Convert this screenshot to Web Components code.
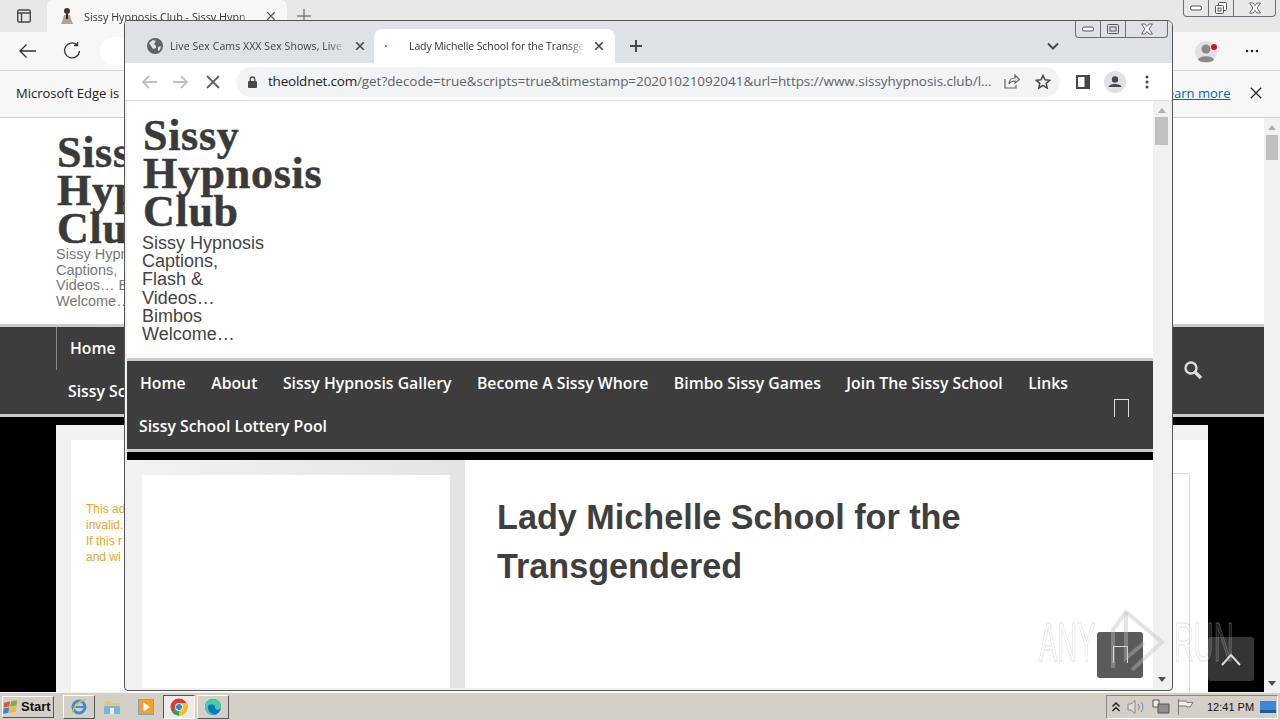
<!DOCTYPE html>
<html>
<head>
<meta charset="utf-8">
<title>Desktop</title>
<style>
  html, body { margin: 0; padding: 0; width: 1280px; height: 720px; overflow: hidden; background: #000; font-family: "Liberation Sans", sans-serif; }
</style>
</head>
<body>
<desk-top>
  <edge-window></edge-window>
  <chrome-window></chrome-window>
  <any-mark></any-mark>
  <task-bar></task-bar>
</desk-top>

<script>
(function(){
    // Small helper so each component only has to list its markup
    function define(name, html){
        customElements.define(name, class extends HTMLElement {
            constructor(){
                super();
                this.attachShadow({mode: 'open'});
                this.shadowRoot.innerHTML = html;
            }
        });
    }

    const NAV_FONT = '"Open Sans", "DejaVu Sans", sans-serif';
    const FADE = 'linear-gradient(90deg, #000 calc(100% - 18px), transparent)';

    define('desk-top', `
        <style>
        :host { display: block; position: relative; width: 1280px; height: 720px; overflow: hidden; background: #000; }
        </style>
        <slot></slot>
    `);

    // Two stroked arrows and crosses are reused by both browsers
    const ICON_X = (size, color, width) => `<svg width="${size}" height="${size}" viewBox="0 0 12 12" fill="none" stroke="${color}" stroke-width="${width}"><path d="M1.5 1.5l9 9M10.5 1.5l-9 9"/></svg>`;

    define('win-controls', `
        <style>
        :host { display: flex; box-sizing: border-box; height: 100%; border: 1px solid #6b6f75; border-top: 0; border-radius: 0 0 4px 4px; }
        div { display: flex; align-items: center; justify-content: center; border-right: 1px solid #6b6f75; }
        div:last-child { border-right: 0; flex: 1; }
        .c { width: 24px; }
        svg { display: block; }
        </style>
        <div class="c"><svg width="14" height="6" viewBox="0 0 14 6"><rect x="1.5" y="1" width="11" height="4" rx="1.5" fill="#fff" stroke="#555"/></svg></div>
        <div class="c"><slot name="mid"></slot></div>
        <div><svg width="14" height="12" viewBox="0 0 14 12" fill="#fff" stroke="#666"><path d="M1.5 1H5L7 3.5 9 1h3.500L9 6l3.500 5H9L7 8.500 5 11H1.500L5 6z"/></svg></div>
    `);

    define('scroll-bar', `
        <style>
        :host { display: flex; flex-direction: column; align-items: center; box-sizing: border-box; width: var(--w, 17px); height: 100%; background: #f1f1f1; }
        .up, .down { width: 0; height: 0; border-left: 4.500px solid transparent; border-right: 4.500px solid transparent; flex: none; }
        .up { border-bottom: 5px solid #b0b0b0; margin-top: var(--top, 7px); }
        .down { border-top: 5px solid #505050; margin-bottom: 6px; }
        .thumb { width: calc(100% - 4px); height: var(--thumb, 28px); background: #c1c1c1; margin-top: var(--gap, 4px); flex: none; }
        .sp { flex: 1; }
        </style>
        <div class="up"></div><div class="thumb"></div><div class="sp"></div><div class="down"></div>
    `);

    define('site-nav', `
        <style>
        :host { display: block; position: relative; box-sizing: border-box; background: #3d3d3d; border-top: 3px solid #cccccc; border-bottom: 3px solid #cccccc; color: #fff; font: 600 15.800px/43px ${NAV_FONT}; }
        ul { list-style: none; margin: 0; padding: 1px 0 0 13px; display: flex; flex-wrap: wrap; column-gap: 25.500px; }
        li { white-space: nowrap; }
        .box { position: absolute; left: 987px; top: 38px; width: 13px; height: 17px; border: 1px solid #ddd; border-bottom: 0; }
        </style>
        <ul>
            <li>Home</li><li>About</li><li>Sissy Hypnosis Gallery</li><li>Become A Sissy Whore</li>
            <li>Bimbo Sissy Games</li><li>Join The Sissy School</li><li>Links</li>
            <li style="margin-left:-1px;flex-basis:100%">Sissy School Lottery Pool</li>
        </ul>
        <div class="box"></div>
    `);

    define('edge-window', `
        <style>
        :host { display: flex; flex-direction: column; position: absolute; left: 0; top: 0; width: 1280px; height: 692px; background: #fff; overflow: hidden; }
        .tabs { height: 32px; background: #e8e8e8; display: flex; align-items: center; flex: none; position: relative; }
        .side { width: 47px; display: flex; justify-content: center; }
        .tab { box-sizing: border-box; width: 240px; height: 32px; background: #f7f7f7; border-radius: 6px 6px 0 0; display: flex; align-items: center; padding: 0 11px 0 12px; font: 10.800px "Open Sans", sans-serif; color: #333; }
        .tab span { flex: 1; margin: 0 10px 0 9px; overflow: hidden; white-space: nowrap; -webkit-mask-image: ${FADE}; mask-image: ${FADE}; }
        .plus { margin-left: 10px; }
        .ctl { position: absolute; left: 1183px; top: 0; width: 93px; height: 17px; }
        .bar { height: 38px; background: #f7f7f7; border-bottom: 1px solid #d8d8d8; display: flex; align-items: center; flex: none; position: relative; }
        .bar .back { margin-left: 18px; }
        .bar .reload { margin-left: 24px; }
        .pill { margin-left: 18px; width: 60px; height: 28px; border-radius: 14px; background: #fff; }
        .prof { position: absolute; left: 1194px; top: 7px; }
        .dots { position: absolute; left: 1245px; top: 17px; }
        .info { box-sizing: border-box; height: 47px; padding: 0 0 2px 16px; background: #f7f7f7; border-bottom: 1px solid #d0d0d0; display: flex; align-items: center; flex: none; font: 13px "Open Sans", sans-serif; color: #222; position: relative; }
        .info a { position: absolute; left: 1160px; color: #0067b8; text-decoration: underline; }
        .info svg { position: absolute; left: 1249px; top: 15px; }
        .page { flex: 1; display: flex; min-height: 0; }
        .main { flex: 1; display: flex; flex-direction: column; min-width: 0; }
        header { height: 206px; box-sizing: border-box; padding: 16px 0 0 57px; background: #fff; flex: none; }
        h1 { margin: 0; width: 130px; font: bold 44px/38px "Liberation Serif", serif; letter-spacing: .7px; color: #3a3a3a; -webkit-text-stroke: .5px #3a3a3a; }
        p { margin: -1px 0 0 -1px; width: 120px; font: 14.500px/15.500px "Liberation Sans", sans-serif; color: #777; }
        nav { flex: none; box-sizing: border-box; height: 93px; background: #3d3d3d; border-top: 3px solid #ccc; border-bottom: 3px solid #ccc; position: relative; color: #fff; font: 600 15.800px/43px ${NAV_FONT}; }
        nav .d { position: absolute; left: 56px; top: 0; height: 43px; border-left: 1px solid #888; padding-left: 13px; }
        nav .e { position: absolute; left: 68px; top: 43px; }
        nav svg { position: absolute; left: 1183px; top: 33px; }
        .black { flex: 1; background: #000; padding: 8px 56px 0; min-height: 0; display: flex; }
        .wrap { flex: 1; background: #f1f1f1; padding: 15px 0 0 15px; display: flex; }
        .inner { flex: 1; background: #fff; position: relative; }
        .inner .msg { position: absolute; left: 15px; top: 61px; font: 12px/16px "Liberation Sans", sans-serif; color: #e8a42c; }
        .inner .line { position: absolute; left: 100px; top: 33px; right: 18px; bottom: 0; border: 1px solid #ddd; border-width: 1px 1px 0 0; }
        .top { position: absolute; left: 1208px; top: 637px; width: 46px; height: 44px; background: rgba(61,61,61,.85); border-radius: 3px; display: flex; align-items: center; justify-content: center; }
        </style>
        <div class="tabs">
            <div class="side"><svg width="16" height="16" viewBox="0 0 16 16" fill="none" stroke="#444" stroke-width="1.400"><rect x="1.700" y="2" width="12.600" height="12" rx="1.500"/><path d="M1.700 5h12.600M5.500 5v9" /></svg></div>
            <div class="tab">
                <svg width="16" height="18" viewBox="0 0 16 18"><circle cx="8" cy="4" r="3" fill="#4a3527"/><path d="M5 8h6l1 4 2 5H2l2-5z" fill="#b8a08c"/><path d="M7 7h2v5H7z" fill="#2a2a2a"/></svg>
                <span>Sissy Hypnosis Club - Sissy Hypn</span>
                ${ICON_X(10, '#555', 1.400)}
            </div>
            <svg class="plus" width="14" height="14" viewBox="0 0 14 14" stroke="#555" stroke-width="1"><path d="M7 0v14M0 7h14"/></svg>
            <win-controls class="ctl"><svg slot="mid" width="14" height="14" viewBox="0 0 14 14" fill="#fff" stroke="#555"><rect x="4.500" y="1.500" width="8" height="8" rx="1"/><rect x="1.500" y="4.500" width="8" height="8" rx="1"/><rect x="4" y="7" width="3" height="3" fill="none"/></svg></win-controls>
        </div>
        <div class="bar">
            <svg class="back" width="20" height="16" viewBox="0 0 20 16" fill="none" stroke="#333" stroke-width="1.300"><path d="M18 8H2M8.500 1.500L2 8l6.500 6.500"/></svg>
            <svg class="reload" width="20" height="20" viewBox="0 0 20 20" fill="none" stroke="#333" stroke-width="1.300"><path d="M15 3.800A7.500 7.500 0 1 0 17.500 10M15.500 1v3.500H12"/></svg>
            <div class="pill"></div>
            <svg class="prof" width="26" height="26" viewBox="0 0 26 26"><circle cx="12" cy="13" r="11" fill="#e2e2e2"/><circle cx="12" cy="10" r="4.500" fill="#8a8a8a"/><path d="M4 21c1-5 15-5 16 0-4 3-12 3-16 0z" fill="#8a8a8a"/><circle cx="20" cy="8" r="3" fill="#e0101a"/></svg>
            <svg class="dots" width="14" height="4" viewBox="0 0 14 4" fill="#222"><circle cx="2" cy="2" r="1.300"/><circle cx="7" cy="2" r="1.300"/><circle cx="12" cy="2" r="1.300"/></svg>
        </div>
        <div class="info">Microsoft Edge is<a>Learn more</a>${ICON_X(14, '#222', 1.100)}</div>
        <div class="page">
            <div class="main">
                <header>
                    <h1>Sissy Hypnosis Club</h1>
                    <p>Sissy Hypnosis Captions, Videos… B Welcome…</p>
                </header>
                <nav>
                    <div class="d">Home</div>
                    <div class="e">Sissy Sc</div>
                    <svg width="20" height="20" viewBox="0 0 20 20" fill="none" stroke="#ddd"><circle cx="8" cy="8" r="5.500" stroke-width="2.400"/><path d="M12 12l6 6" stroke-width="3.400"/></svg>
                </nav>
                <div class="black">
                    <div class="wrap"><div class="inner">
                        <div class="msg">This ad<br>invalid.<br>If this r<br>and wi</div>
                        <div class="line"></div>
                    </div></div>
                </div>
            </div>
            <scroll-bar style="--w:16px;--top:7px;--gap:5px;--thumb:25px"></scroll-bar>
        </div>
        <div class="top"><svg width="22" height="14" viewBox="0 0 22 14" fill="none" stroke="#ddd" stroke-width="2"><path d="M2 13l9-10 9 10"/></svg></div>
    `);

    define('chrome-window', `
        <style>
        :host { display: flex; flex-direction: column; box-sizing: border-box; position: absolute; left: 124px; top: 20px; width: 1049px; height: 671px; background: #f0f0f0; border: 1px solid #555; border-radius: 4px 6px 4px 4px; padding: 0 2px 2px 2px; overflow: hidden; }
        .ctl { position: absolute; left: 950px; top: 0; width: 93px; height: 17px; z-index: 2; }
        .tabs { height: 42px; flex: none; margin: 0 -2px; background: #dee1e6; display: flex; align-items: flex-end; position: relative; font: 10.500px "Open Sans", sans-serif; color: #3c4043; }
        .t1 { box-sizing: border-box; width: 249px; height: 34px; padding: 0 9px 0 22px; display: flex; align-items: center; }
        .t2 { box-sizing: border-box; width: 241px; height: 34px; padding: 0 11px 0 35px; display: flex; align-items: center; background: #fff; border-radius: 8px 8px 0 0; color: #333; position: relative; }
        .t2 i { position: absolute; left: 11px; top: 16px; width: 2px; height: 2px; border-radius: 50%; background: #1a73e8; }
        .t1 span, .t2 span { flex: 1; overflow: hidden; white-space: nowrap; margin-right: 8px; -webkit-mask-image: ${FADE}; mask-image: ${FADE}; }
        .t1 span { margin-left: 7px; letter-spacing: .09px; }
        .t2 span { letter-spacing: -.1px; }
        .plus { margin: 0 0 10px 14px; }
        .chev { position: absolute; left: 922px; top: 21px; }
        .bar { height: 37px; flex: none; margin: 0 -2px; background: #fff; border-bottom: 1px solid #dadce0; display: flex; align-items: center; position: relative; }
        .bar > svg { flex: none; }
        .nav1 { margin-left: 16px; }
        .nav2 { margin-left: 16px; }
        .nav3 { margin-left: 17px; }
        .omni { box-sizing: border-box; margin-left: 16px; width: 824px; height: 30px; border-radius: 15px; background: #f1f3f4; display: flex; align-items: center; padding: 0 10px 0 12px; position: relative; flex: none; }
        .url { margin: -1px 0 0 11px; width: 725px; flex: none; font: 13.500px "Open Sans", sans-serif; letter-spacing: -.05px; white-space: nowrap; color: #5f6368; }
        .url b { font-weight: 400; color: #202124; letter-spacing: -.22px; }
        .omni .share { margin-left: 11px; flex: none; }
        .omni .star { margin-left: 15px; flex: none; }
        .side { margin-left: 16px; }
        .ava { margin-left: 14px; }
        .dots { margin-left: 19px; }
        .view { flex: 1; min-height: 0; display: flex; background: #fff; }
        .site { flex: 1; min-width: 0; display: flex; flex-direction: column; }
        header { height: 257px; flex: none; box-sizing: border-box; padding: 16px 0 0 16px; }
        h1 { margin: 0; width: 190px; font: bold 44px/38px "Liberation Serif", serif; letter-spacing: .7px; color: #3a3a3a; -webkit-text-stroke: .5px #3a3a3a; }
        p { margin: 3px 0 0 -1px; width: 124px; font: 18px/18.200px "Liberation Sans", sans-serif; color: #444; }
        site-nav { flex: none; height: 94px; }
        .black { height: 8px; flex: none; background: #000; }
        .cols { flex: 1; min-height: 0; display: flex; }
        aside { box-sizing: border-box; width: 338px; flex: none; padding: 15px 15px 0; background: linear-gradient(90deg, #f2f2f2, #e4e4e4); }
        aside div { background: #fff; height: 100%; }
        article { flex: 1; padding: 33px 0 0 32px; }
        h2 { margin: 0; width: 580px; font: bold 34.200px/49px "Liberation Sans", sans-serif; color: #3f3f3f; }
        .top { position: absolute; left: 972px; top: 611px; width: 46px; height: 46px; background: rgba(61,61,61,.85); border-radius: 3px; z-index: 1; }
        .top i { position: absolute; left: 16px; top: 14px; width: 13px; height: 16px; border: 1px solid #ddd; border-bottom: 0; }
        </style>
        <win-controls class="ctl"><svg slot="mid" width="14" height="12" viewBox="0 0 14 12" fill="none" stroke="#555"><rect x="1.500" y="1.500" width="11" height="9" rx="1"/><rect x="4" y="4" width="6" height="4"/></svg></win-controls>
        <div class="tabs">
            <div class="t1">
                <svg width="16" height="16" viewBox="0 0 16 16"><circle cx="8" cy="8" r="8" fill="#5f6368"/><path d="M2 5l4-3 3 1-2 3 2 2v2l-3 1-2-3zM11 9l3-1-1 4-2 1z" fill="#dee1e6"/></svg>
                <span>Live Sex Cams XXX Sex Shows, Live</span>
                ${ICON_X(10, '#45494e', 2)}
            </div>
            <div class="t2">
                <i></i>
                <span>Lady Michelle School for the Transge</span>
                ${ICON_X(10, '#45494e', 2)}
            </div>
            <svg class="plus" width="14" height="14" viewBox="0 0 14 14" stroke="#45494e" stroke-width="2"><path d="M7 1v12M1 7h12"/></svg>
            <svg class="chev" width="12" height="8" viewBox="0 0 12 8" fill="none" stroke="#45494e" stroke-width="2"><path d="M1 1.500l5 5 5-5"/></svg>
        </div>
        <div class="bar">
            <svg class="nav1" width="16" height="14" viewBox="0 0 16 14" fill="none" stroke="#bdc1c6" stroke-width="1.800"><path d="M16 7H2M8 1L2 7l6 6"/></svg>
            <svg class="nav2" width="16" height="14" viewBox="0 0 16 14" fill="none" stroke="#bdc1c6" stroke-width="1.800"><path d="M0 7h14M8 1l6 6-6 6"/></svg>
            <svg class="nav3" width="14" height="14" viewBox="0 0 14 14" fill="none" stroke="#5f6368" stroke-width="1.800"><path d="M1 1l12 12M13 1L1 13"/></svg>
            <div class="omni">
                <svg width="9" height="12" viewBox="0 0 9 12" style="flex:none"><path d="M2.200 5V3.300a2.300 2.300 0 0 1 4.600 0V5" fill="none" stroke="#45494e" stroke-width="1.300"/><rect y="5" width="9" height="7" rx="1" fill="#45494e"/></svg>
                <div class="url"><b>theoldnet.com</b>/get?decode=true&amp;scripts=true&amp;timestamp=20201021092041&amp;url=https://www.sissyhypnosis.club/l...</div>
                <svg class="share" width="16" height="15" viewBox="0 0 16 15" fill="none" stroke="#5f6368" stroke-width="1.200"><path d="M1 5v9h11v-3M5 10c0-4 3-6 6-6V1l4.500 4.500L11 9V7c-3 0-5 1-6 3z"/></svg>
                <svg class="star" width="16" height="15" viewBox="0 0 16 15" fill="none" stroke="#45494e" stroke-width="1.500"><path d="M8 1.500l2 4.300 4.700.5-3.500 3.200 1 4.600L8 11.300l-4.200 2.800 1-4.600L1.300 6.300 6 5.800z"/></svg>
            </div>
            <svg class="side" width="14" height="14" viewBox="0 0 14 14"><path d="M0 0h14v14H0z" fill="#45494e"/><path d="M2 2h6.500v10H2z" fill="#fff"/></svg>
            <svg class="ava" width="22" height="22" viewBox="0 0 22 22"><circle cx="11" cy="11" r="11" fill="#dee1e6"/><circle cx="11" cy="8.500" r="3.200" fill="#45494e"/><path d="M4.500 16c.5-4 12.500-4 13 0z" fill="#45494e"/></svg>
            <svg class="dots" width="4" height="14" viewBox="0 0 4 14" fill="#45494e"><circle cx="2" cy="2" r="1.500"/><circle cx="2" cy="7" r="1.500"/><circle cx="2" cy="12" r="1.500"/></svg>
        </div>
        <div class="view">
            <div class="site">
                <header>
                    <h1>Sissy Hypnosis Club</h1>
                    <p>Sissy Hypnosis Captions, Flash &amp; Videos… Bimbos Welcome…</p>
                </header>
                <site-nav></site-nav>
                <div class="black"></div>
                <div class="cols">
                    <aside><div></div></aside>
                    <article><h2>Lady Michelle School for the Transgendered</h2></article>
                </div>
            </div>
            <scroll-bar style="--w:17px;--top:7px;--gap:4px;--thumb:28px"></scroll-bar>
        </div>
        <div class="top"><i></i></div>
    `);

    define('any-mark', `
        <style>
        :host { display: block; position: absolute; left: 1036px; top: 608px; width: 200px; height: 66px; pointer-events: none; z-index: 3; }
        span { position: absolute; top: 4px; font: 55px/60px "Liberation Sans", sans-serif; color: rgba(255,255,255,.12); -webkit-text-stroke: 1px rgba(180,180,180,.4); transform: scaleX(.5); transform-origin: left top; }
        svg { position: absolute; left: 72px; top: 0; }
        </style>
        <span style="left:3px">ANY</span>
        <svg width="58" height="66" viewBox="0 0 58 66" fill="none" stroke="rgba(190,190,190,.4)" stroke-width="4"><path d="M5 60V22L18 4l36 30-30 28"/><path d="M18 4v46l18-15"/></svg>
        <span style="left:138px">RUN</span>
    `);

    define('task-bar', `
        <style>
        :host { display: flex; align-items: center; box-sizing: border-box; position: absolute; left: 0; top: 692px; width: 1280px; height: 28px; background: #d4d0c8; border-top: 1px solid #f4f2ee; z-index: 4; font-family: "Liberation Sans", sans-serif; color: #111; }
        .start { box-sizing: border-box; display: flex; align-items: center; margin-left: 2px; width: 52px; height: 22px; background: #d4d0c8; border: 1px solid; border-color: #fff #555 #555 #fff; font: bold 13px "Liberation Sans", sans-serif; }
        .sep { width: 9px; }
        .b { box-sizing: border-box; width: 32px; height: 24px; display: flex; align-items: center; justify-content: center; flex: none; }
        .up { border: 1px solid; border-color: #fff #555 #555 #fff; }
        .pressed { border: 1px solid; border-color: #555 #fff #fff #555; background: #ececec; }
        .tray { box-sizing: border-box; margin: 0 2px 0 auto; display: flex; align-items: center; width: 172px; height: 24px; border: 1px solid; border-color: #888 #fff #fff #888; font: 11px "Liberation Sans", sans-serif; padding-left: 4px; }
        .tray svg { flex: none; }
        .clock { margin-left: 13px; white-space: nowrap; }
        </style>
        <div class="start">
            <svg width="17" height="16" viewBox="0 0 19 17" style="margin-right:1px"><path d="M1 4l7-2-1 6-6 1z" fill="#e2572b"/><path d="M9 2l7-1-1 6-7 1z" fill="#7db343"/><path d="M1 10l6-1-1 6-6 1z" fill="#3f7fd6"/><path d="M8 9l7-1-1 6-7 1z" fill="#f2b632"/></svg>
            Start
        </div>
        <div class="sep"></div>
        <div class="b up"><svg width="18" height="18" viewBox="0 0 18 18" fill="none"><circle cx="9" cy="9" r="6" stroke="#3a8fd8" stroke-width="3"/><path d="M5 9h9" stroke="#3a8fd8" stroke-width="2"/><path d="M2 15C4 8 10 3 16 1" stroke="#e8b93a" stroke-width="1.500"/></svg></div>
        <div class="b" style="margin-left:1px"><svg width="18" height="18" viewBox="0 0 18 18"><path d="M2 3h5l2 2h7v4H2z" fill="#e9c766"/><path d="M1 8h16v8H1z" fill="#79b5d6"/><path d="M7 10h4v6H7z" fill="#e8eef2"/></svg></div>
        <div class="b" style="margin-left:2px"><svg width="16" height="16" viewBox="0 0 16 16"><rect x=".5" y=".5" width="15" height="15" fill="#f3a02c" stroke="#7da3c8"/><path d="M5.500 3.500L12 8l-6.500 4.500z" fill="#fff"/></svg></div>
        <div class="b pressed" style="margin-left:1px"><svg width="18" height="18" viewBox="0 0 18 18"><circle cx="9" cy="9" r="8.500" fill="#e0392e"/><path d="M9 9L1.600 13.200A8.500 8.500 0 0 0 9 17.500z" fill="#2fa34f"/><path d="M9 9l0 8.500A8.500 8.500 0 0 0 16.600 5H9z" fill="#f6c11d"/><circle cx="9" cy="9" r="4" fill="#fff"/><circle cx="9" cy="9" r="3" fill="#3d7ede"/></svg></div>
        <div class="b up" style="margin-left:2px"><svg width="18" height="18" viewBox="0 0 18 18"><circle cx="9" cy="9" r="8" fill="#1272c4"/><path d="M1 9a8 8 0 0 1 16 0c0 3-5 4-6 1 1-3-4-5-7-2-1 3 2 8 7 8-6 2-10-2-10-7z" fill="#42d0a8"/></svg></div>
        <div class="tray">
            <svg width="10" height="12" viewBox="0 0 10 12" fill="none" stroke="#222" stroke-width="1.500"><path d="M1.500 5.500L5 2l3.500 3.500M1.500 10L5 6.500 8.500 10"/></svg>
            <svg width="18" height="16" viewBox="0 0 18 16" style="margin-left:6px" fill="none" stroke="#888"><path d="M1 5h3l4-3.500v13L4 11H1z" fill="#ddd"/><path d="M11 5c1.500 2 1.500 4 0 6M14 3c2.500 3 2.500 7 0 10" stroke="#5d89b0"/></svg>
            <svg width="18" height="16" viewBox="0 0 18 16" style="margin-left:7px"><path d="M1 1h6v7H1z" fill="#eee" stroke="#555"/><path d="M6 5h11v9H6z" fill="#8e8e8e" stroke="#555"/></svg>
            <svg width="17" height="16" viewBox="0 0 17 16" style="margin-left:7px" fill="none" stroke="#777"><path d="M1.500 0v16M2 2h7l1 1.500h6L13 8h-3L9 7H2" fill="#f0f0f0"/></svg>
            <span class="clock">12:41 PM</span>
            <svg width="16" height="12" viewBox="0 0 16 12" style="margin-left:6px"><rect width="16" height="12" fill="#3c86d8"/><rect y="9" width="16" height="3" fill="#205a9e"/></svg>
        </div>
    `);
})();
</script>
</body>
</html>
